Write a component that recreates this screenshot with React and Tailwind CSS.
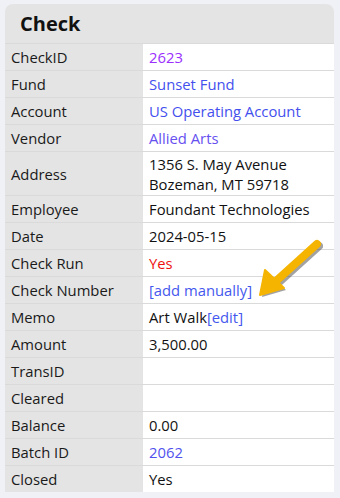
const rows = [
  { label: "CheckID", value: "2623", cls: "text-[#9b30ff]" },
  { label: "Fund", value: "Sunset Fund", cls: "text-[#4450ee]" },
  { label: "Account", value: "US Operating Account", cls: "text-[#4450ee]" },
  { label: "Vendor", value: "Allied Arts", cls: "text-[#6650f0]" },
  { label: "Address", value: ["1356 S. May Avenue", "Bozeman, MT 59718"], cls: "text-[#111]" },
  { label: "Employee", value: "Foundant Technologies", cls: "text-[#111]" },
  { label: "Date", value: "2024-05-15", cls: "text-[#111]" },
  { label: "Check Run", value: "Yes", cls: "text-[#ee1111]" },
  { label: "Check Number", value: "[add manually]", cls: "text-[#4458ee]" },
  { label: "Memo", value: "memo", cls: "text-[#111]" },
  { label: "Amount", value: "3,500.00", cls: "text-[#111]" },
  { label: "TransID", value: "", cls: "" },
  { label: "Cleared", value: "", cls: "" },
  { label: "Balance", value: "0.00", cls: "text-[#111]" },
  { label: "Batch ID", value: "2062", cls: "text-[#5052ee]" },
  { label: "Closed", value: "Yes", cls: "text-[#111]" },
];

const Arrow = () => (
  <svg
    className="absolute left-[244px] top-[230px] pointer-events-none"
    width="84"
    height="70"
    viewBox="0 0 84 70"
  >
    <g transform="translate(2,2)" fill="#333" opacity="0.45">
      <path d="M68 10 L26 48" stroke="#333" strokeWidth="8" strokeLinecap="round" fill="none" />
      <path d="M11 61 L16 36 L35 54 Z" />
    </g>
    <path d="M68 10 L26 48" stroke="#f5b400" strokeWidth="8" strokeLinecap="round" fill="none" />
    <path d="M11 61 L16 36 L35 54 Z" fill="#f5b400" stroke="#f5b400" strokeWidth="2" strokeLinejoin="round" />
  </svg>
);

export default function App() {
  return (
    <div
      className="min-h-[498px] bg-[#f0f1f6] pt-1 pl-[5px] pr-[6px]"
      style={{ fontFamily: '"Open Sans", "Noto Sans", sans-serif' }}
    >
      <div className="relative rounded-t-lg overflow-hidden">
        <div className="bg-[#e4e4e4] h-[39px] flex items-center pl-[15px]">
          <h1 className="text-[20px] font-bold text-[#111]">Check</h1>
        </div>
        {rows.map((r) => {
          const multi = Array.isArray(r.value);
          return (
            <div key={r.label} className="flex border-t border-[#dadada] text-[14.8px] leading-[18px]">
              <div className="w-[138px] shrink-0 bg-[#e4e4e4] px-[6px] py-[4px] flex items-center text-[#1a1a1a]">
                {r.label}
              </div>
              <div
                className={`flex-1 bg-white px-[6px] ${multi ? "py-[1.5px] leading-[20px]" : "py-[4px]"} ${r.cls}`}
              >
                {multi ? (
                  r.value.map((l) => <div key={l}>{l}</div>)
                ) : r.value === "memo" ? (
                  <span>
                    Art Walk<span className="text-[#4458ee]">[edit]</span>
                  </span>
                ) : (
                  r.value || "\u00a0"
                )}
              </div>
            </div>
          );
        })}
        <Arrow />
      </div>
    </div>
  );
}
